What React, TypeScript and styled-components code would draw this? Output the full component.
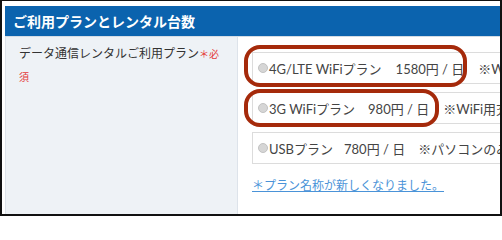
import styled, { createGlobalStyle } from "styled-components";

const GlobalStyle = createGlobalStyle`
  html, body {
    margin: 0;
    padding: 0;
    background: #fff;
  }
  * {
    box-sizing: border-box;
  }
`;

const Frame = styled.div`
  width: 502px;
  height: 216px;
  border: 2px solid #111;
  border-top-width: 1px;
  padding: 5px 0 0 3px;
  overflow: hidden;
  display: flex;
  flex-direction: column;
  background: #fff;
`;

const Header = styled.div`
  height: 30px;
  flex-shrink: 0;
  background: #0b63ae;
  color: #fff;
  padding-left: 8px;
  font-family: "Noto Sans CJK JP", sans-serif;
  font-weight: bold;
  font-size: 14px;
  line-height: 30px;
  white-space: nowrap;
`;

const Row = styled.div`
  flex: 1;
  display: flex;
  border-top: 1px solid #d3dce5;
  min-height: 0;
`;

const Label = styled.div`
  width: 233px;
  flex-shrink: 0;
  background: #eef2f6;
  border-left: 1px solid #dde3ea;
  border-right: 1px solid #dde3ea;
  padding: 5px 14px 0 13px;
  font-family: "Noto Sans CJK JP", sans-serif;
  font-size: 12px;
  line-height: 22px;
  color: #333;
`;

const Required = styled.span`
  color: #e43a3a;
  font-size: 10px;
`;

const Content = styled.div`
  flex: 1;
  min-width: 0;
  padding: 15px 0 0 14px;
`;

const Options = styled.div`
  display: flex;
  flex-direction: column;
  gap: 8px;
`;

const Option = styled.div`
  position: relative;
  height: 32px;
  display: flex;
  align-items: center;
  padding-left: 5px;
  border: 1px solid #dcdcdc;
  border-right: none;
  background: #fff;
  white-space: nowrap;
  font-family: "Lato", "Noto Sans CJK JP", sans-serif;
  font-size: 13px;
  color: #444;
`;

const Radio = styled.span`
  width: 10px;
  height: 10px;
  border-radius: 50%;
  background: #d6d6d6;
  border: 1px solid #c2c2c2;
  margin-right: 1px;
  flex-shrink: 0;
`;

const Price = styled.span<{ $gap: number }>`
  margin-left: ${(p) => p.$gap}px;
`;

const Note = styled.span<{ $gap: number }>`
  margin-left: ${(p) => p.$gap}px;
`;

const Circle = styled.span<{ $x: number; $y: number; $w: number; $h: number }>`
  position: absolute;
  left: ${(p) => p.$x}px;
  top: ${(p) => p.$y}px;
  width: ${(p) => p.$w}px;
  height: ${(p) => p.$h}px;
  border: 4px solid #a52a0b;
  border-radius: 16px;
  pointer-events: none;
`;

const NoticeLink = styled.a`
  display: inline-block;
  margin-top: 12px;
  font-family: "Noto Sans CJK JP", sans-serif;
  font-size: 12px;
  line-height: 18px;
  color: #4a93d8;
  text-decoration: underline;
  white-space: nowrap;
`;

type Plan = {
  name: string;
  priceGap: number;
  price: string;
  noteGap: number;
  note: string;
  circle?: { x: number; y: number; w: number; h: number };
};

const plans: Plan[] = [
  {
    name: "4G/LTE WiFiプラン",
    priceGap: 14,
    price: "1580円 / 日",
    noteGap: 14,
    note: "※WiFiルーター貸出",
    circle: { x: -9, y: -8, w: 223, h: 42 },
  },
  {
    name: "3G WiFiプラン",
    priceGap: 13,
    price: "980円 / 日",
    noteGap: 14,
    note: "※WiFi用充電器付き",
    circle: { x: -9, y: -4, w: 195, h: 38 },
  },
  {
    name: "USBプラン",
    priceGap: 11,
    price: "780円 / 日",
    noteGap: 13,
    note: "※パソコンのみ対応",
  },
];

const App = () => {
  return (
    <>
      <GlobalStyle />
      <Frame>
        <Header>ご利用プランとレンタル台数</Header>
        <Row>
          <Label>
            データ通信レンタルご利用プラン<Required>＊必須</Required>
          </Label>
          <Content>
            <Options>
              {plans.map((plan) => (
                <Option key={plan.name}>
                  <Radio />
                  {plan.name}
                  <Price $gap={plan.priceGap}>{plan.price}</Price>
                  <Note $gap={plan.noteGap}>{plan.note}</Note>
                  {plan.circle && (
                    <Circle
                      $x={plan.circle.x}
                      $y={plan.circle.y}
                      $w={plan.circle.w}
                      $h={plan.circle.h}
                    />
                  )}
                </Option>
              ))}
            </Options>
            <NoticeLink href="#">＊プラン名称が新しくなりました。</NoticeLink>
          </Content>
        </Row>
      </Frame>
    </>
  );
};

export default App;
